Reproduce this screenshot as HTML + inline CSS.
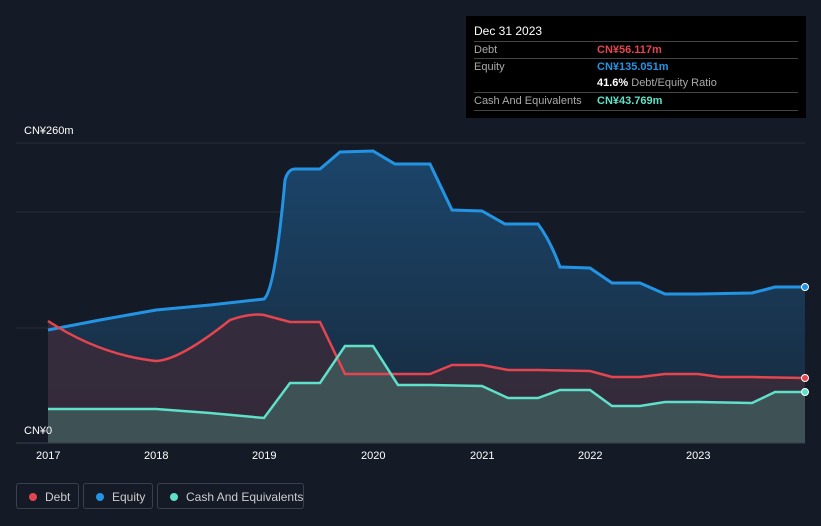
<!DOCTYPE html><html><head><meta charset="utf-8"><style>
body{margin:0;width:821px;height:526px;background:#151b26;font-family:"Liberation Sans",sans-serif;overflow:hidden;position:relative}
.tt{position:absolute;left:466px;top:16px;width:340px;height:102px;background:#000;color:#fff;font-size:11px}
.tt .r{position:absolute;left:8px;right:8px;border-top:1px solid #444;height:17px;line-height:17px;color:#aaa}
.tt .v{position:absolute;left:123px;font-weight:bold}
.lg{position:absolute;top:483px;height:26px;border:1px solid #3b414c;border-radius:3px;color:#ccc;font-size:12px;line-height:26px;box-sizing:border-box;white-space:nowrap}
.lg i{position:absolute;left:12px;top:9px;width:8px;height:8px;border-radius:50%}
.ax{position:absolute;top:450px;color:#fff;font-size:11px}
</style></head><body>
<svg width="821" height="526" style="position:absolute;left:0;top:0">
<defs>
<linearGradient id="ge" x1="0" y1="0" x2="0" y2="1"><stop offset="0" stop-color="#1c4a72"/><stop offset="1" stop-color="#172a3e"/></linearGradient>
</defs>
<line x1="16" y1="143" x2="805" y2="143" stroke="#262d38"/>
<line x1="16" y1="212" x2="805" y2="212" stroke="#262d38"/>
<line x1="16" y1="328" x2="805" y2="328" stroke="#262d38"/>
<path d="M48,330 L100,320 L156,310 L210,305 L264,299 Q275,290 285,180 Q288,169 295,169 L320,169 L340,152 L373,151 L395,164 L430,164 L452,210 L482,211 L505,224 L538,224 Q550,240 560,267 L590,268 L612,283 L640,283 L665,294 L698,294 L752,293 L775,287 L805,287 L805,443 L48,443Z" fill="url(#ge)" opacity="0.9"/>
<path d="M48,321 Q100,355 156,361 Q180,360 230,320 Q250,313 264,315 L290,322 L320,322 L345,374 L430,374 L452,365 L482,365 L508,370 L538,370 L590,371 L612,377 L640,377 L665,374 L698,374 L720,377 L752,377 L805,378 L805,443 L48,443Z" fill="#3a2a3a" opacity="0.85"/>
<path d="M48,409 L156,409 L210,413 L264,418 L290,383 L320,383 L345,346 L373,346 L398,385 L430,385 L482,386 L508,398 L538,398 L560,390 L590,390 L612,406 L640,406 L665,402 L698,402 L752,403 L775,392 L805,392 L805,443 L48,443Z" fill="#3f5558" opacity="0.9"/>
<path d="M48,330 L100,320 L156,310 L210,305 L264,299 Q275,290 285,180 Q288,169 295,169 L320,169 L340,152 L373,151 L395,164 L430,164 L452,210 L482,211 L505,224 L538,224 Q550,240 560,267 L590,268 L612,283 L640,283 L665,294 L698,294 L752,293 L775,287 L805,287" fill="none" stroke="#2394e3" stroke-width="3"/>
<path d="M48,321 Q100,355 156,361 Q180,360 230,320 Q250,313 264,315 L290,322 L320,322 L345,374 L430,374 L452,365 L482,365 L508,370 L538,370 L590,371 L612,377 L640,377 L665,374 L698,374 L720,377 L752,377 L805,378" fill="none" stroke="#e5454f" stroke-width="2.5"/>
<path d="M48,409 L156,409 L210,413 L264,418 L290,383 L320,383 L345,346 L373,346 L398,385 L430,385 L482,386 L508,398 L538,398 L560,390 L590,390 L612,406 L640,406 L665,402 L698,402 L752,403 L775,392 L805,392" fill="none" stroke="#5fe0c8" stroke-width="2.5"/>
<line x1="16" y1="443" x2="805" y2="443" stroke="#3b414c"/>
<circle cx="805" cy="287" r="3.5" fill="#2394e3" stroke="#fff"/>
<circle cx="805" cy="378" r="3.5" fill="#e5454f" stroke="#fff"/>
<circle cx="805" cy="392" r="3.5" fill="#5fe0c8" stroke="#fff"/>
</svg>
<div style="position:absolute;left:24px;top:125px;color:#fff;font-size:11px">CN¥260m</div>
<div style="position:absolute;left:24px;top:425px;color:#fff;font-size:11px">CN¥0</div>
<div class="ax" style="left:36px">2017</div><div class="ax" style="left:144px">2018</div><div class="ax" style="left:252px">2019</div><div class="ax" style="left:361px">2020</div><div class="ax" style="left:470px">2021</div><div class="ax" style="left:578px">2022</div><div class="ax" style="left:686px">2023</div>
<div class="tt">
<div style="position:absolute;left:8px;top:8px;font-size:12px">Dec 31 2023</div>
<div class="r" style="top:25px">Debt<span class="v" style="color:#e5454f">CN¥56.117m</span></div>
<div class="r" style="top:42px">Equity<span class="v" style="color:#2394e3">CN¥135.051m</span></div>
<div class="r" style="top:59px;border-top:none"><span class="v" style="color:#fff">41.6% <span style="color:#aaa;font-weight:normal">Debt/Equity Ratio</span></span></div>
<div class="r" style="top:76px">Cash And Equivalents<span class="v" style="color:#5fe0c8">CN¥43.769m</span></div>
<div class="r" style="top:94px;height:0"></div>
</div>
<div class="lg" style="left:16px;width:63px"><i style="background:#e5454f"></i><span style="position:absolute;left:28px">Debt</span></div>
<div class="lg" style="left:83px;width:70px"><i style="background:#2394e3"></i><span style="position:absolute;left:28px">Equity</span></div>
<div class="lg" style="left:157px;width:147px"><i style="background:#5fe0c8"></i><span style="position:absolute;left:28px">Cash And Equivalents</span></div>
</body></html>
